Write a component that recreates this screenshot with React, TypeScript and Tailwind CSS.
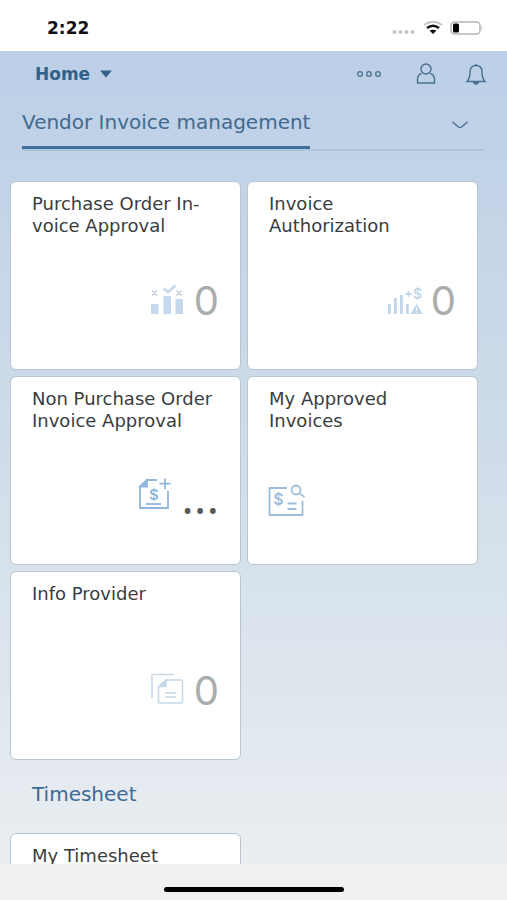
import type { ReactNode } from 'react'

interface Tile { title: string; icon: ReactNode; value?: string; loading?: boolean }

const OrderBars = () => (
  <svg width="40" height="40" viewBox="0 0 40 40" className="shrink-0 text-[#c5d8ed]" fill="currentColor" aria-hidden="true">
    <rect x="3" y="23" width="7.5" height="10"/>
    <rect x="15.5" y="15" width="7.5" height="18"/>
    <rect x="27.5" y="18" width="7.5" height="15"/>
    <path d="M4 9.5l5 5M9 9.5l-5 5M28.5 9.5l5 5M33.5 9.5l-5 5" stroke="#c3cfdc" strokeWidth="1.5" fill="none"/>
    <path d="M15.5 7.5l4.500 3.500 7.500-6.500" stroke="currentColor" strokeWidth="2.6" fill="none"/>
  </svg>
)

const AuthorizationBars = () => (
  <svg width="40" height="40" viewBox="0 0 40 40" className="shrink-0 text-[#c1d6ea]" fill="currentColor" aria-hidden="true">
    <rect x="3" y="23" width="2.8" height="10"/>
    <rect x="9" y="17" width="2.8" height="16"/>
    <rect x="15" y="14" width="2.8" height="19"/>
    <rect x="21" y="23" width="2.8" height="10"/>
    <path d="M23.5 10v6M20.5 13h6" stroke="currentColor" strokeWidth="1.8"/>
    <text x="32.5" y="18" textAnchor="middle" fontSize="14" fontWeight="600" fontFamily="Inter, sans-serif">$</text>
    <path d="M31.5 23l6 10h-12z"/>
    <path d="M31.5 26.5v3M31.5 30.5v1.2" stroke="#fff" strokeWidth="1.2"/>
  </svg>
)

const AddInvoice = () => (
  <svg width="40" height="40" viewBox="0 0 40 40" className="shrink-0 text-[#92b7db]" fill="none" stroke="currentColor" strokeWidth="1.8" aria-hidden="true">
    <path d="M22 4H12L5 10.500V32h28V15"/>
    <path d="M12 4v6.500H5z" fill="currentColor"/>
    <path d="M30 2.500v10.500M24.500 7.700h11"/>
    <path d="M11 28h15"/>
    <text x="19" y="24" textAnchor="middle" fontSize="15" fontWeight="600" fontFamily="Inter, sans-serif" fill="currentColor" stroke="none">$</text>
  </svg>
)

const SearchInvoice = () => (
  <svg width="40" height="40" viewBox="0 0 40 40" className="shrink-0 text-[#9dbedd]" fill="none" stroke="currentColor" strokeWidth="1.8" aria-hidden="true">
    <path d="M19 12H1.500v27H34.500V25"/>
    <circle cx="28" cy="14" r="4.500"/>
    <path d="M31.500 17.500l5 3.500"/>
    <path d="M19.500 27.500h9M19.500 33h9"/>
    <text x="10.500" y="28.500" textAnchor="middle" fontSize="16" fontWeight="600" fontFamily="Inter, sans-serif" fill="currentColor" stroke="none">$</text>
  </svg>
)

const Documents = () => (
  <svg width="40" height="40" viewBox="0 0 40 40" className="shrink-0 text-[#c5d9ea]" fill="none" stroke="currentColor" strokeWidth="1.6" aria-hidden="true">
    <path d="M4 27V4.500q0-1 1-1h21"/>
    <path d="M18 9h15q1.500 0 1.500 1.500v20q0 1.500-1.500 1.500H12q-1.500 0-1.500-1.500V16z"/>
    <path d="M18 9v6.500h-7z" fill="currentColor"/>
    <path d="M17 22h11M17 26h11"/>
  </svg>
)

const INVOICE_TILES: Tile[] = [
  { title: 'Purchase Order In-\nvoice Approval', icon: <OrderBars/>, value: '0' },
  { title: 'Invoice\nAuthorization', icon: <AuthorizationBars/>, value: '0' },
  { title: 'Non Purchase Order\nInvoice Approval', icon: <AddInvoice/>, loading: true },
  { title: 'My Approved\nInvoices', icon: <SearchInvoice/> },
  { title: 'Info Provider', icon: <Documents/>, value: '0' },
]

const TIMESHEET_TILES: Tile[] = [
  { title: 'My Timesheet', icon: null },
]

function TileGrid({ tiles }: { tiles: Tile[] }) {
  return (
    <div className="grid grid-cols-2 gap-1.5 pl-2.5 pr-[29px]">
      {tiles.map(t => {
        const hasValue = t.value !== undefined || t.loading
        return (
          <a key={t.title} href="#" className="flex h-[189px] flex-col rounded-md border border-[#b9c5d2] bg-white pt-[11px]">
            <h3 className="whitespace-pre pl-[21px] text-[18px] leading-[22px] text-[#3a3d40]">{t.title}</h3>
            <div className={`mt-auto mb-[48px] flex h-10 items-center gap-1.5 ${hasValue ? 'justify-end pr-[21px]' : 'pl-5'}`}>
              {t.icon}
              {t.value !== undefined && <span className="font-['Inter',sans-serif] text-[40px] leading-10 text-[#a9adad]">{t.value}</span>}
              {t.loading && <span className="font-['Open_Sans',sans-serif] text-[48px] leading-10 text-[#55585b]">...</span>}
            </div>
          </a>
        )
      })}
    </div>
  )
}

export default function App() {
  return (
    <div className="flex h-screen flex-col overflow-hidden bg-white font-['DejaVu_Sans',sans-serif]">
      {/* Phone status bar */}
      <div className="flex h-[51px] shrink-0 items-center justify-between pl-[47px] pr-6 pt-1">
        <span className="text-[17px] font-bold leading-5 text-[#111]">2:22</span>
        <svg width="92" height="20" viewBox="0 0 92 20" aria-hidden="true">
          <g fill="#c4c4c4">
            <circle cx="3.500" cy="14" r="2"/><circle cx="9.500" cy="14" r="2"/><circle cx="15.500" cy="14" r="2"/><circle cx="21.500" cy="14" r="2"/>
          </g>
          <g fill="none" strokeWidth="2.600">
            <path d="M33 7q9-6.500 18 0" stroke="#c4c4c4" strokeWidth="2"/>
            <path d="M36 10q6-4.500 12 0" stroke="#111"/>
          </g>
          <path d="M38.500 12.500q3.500-1.500 7 0L42 16z" fill="#111"/>
          <rect x="60" y="4" width="29" height="12" rx="3.500" fill="none" stroke="#b5b5b5" strokeWidth="1.500"/>
          <path d="M90.500 8q2 2 0 4z" fill="#b5b5b5"/>
          <rect x="62" y="5.500" width="6" height="9" rx="1.500" fill="#000"/>
        </svg>
      </div>

      <main className="min-h-0 flex-1 overflow-hidden bg-linear-to-b from-[#bccfe7] via-[#d0dde9] to-[#eaeef1]">
        <header className="flex h-[46px] items-center justify-between pl-[35px] pr-5">
          <button className="flex items-center gap-2.5 text-[17px] font-bold leading-6 text-[#32618a]">
            Home
            <svg width="12" height="8" viewBox="0 0 12 8" fill="currentColor" aria-hidden="true"><path d="M0 .5h12L6 7.500z"/></svg>
          </button>
          <div className="flex items-center text-[#48708f]">
            <button aria-label="More" className="mr-8">
              <svg width="26" height="24" viewBox="0 0 26 24" fill="none" stroke="currentColor" strokeWidth="1.300">
                <circle cx="5" cy="12" r="2.300"/><circle cx="14" cy="12" r="2.300"/><circle cx="23" cy="12" r="2.300"/>
              </svg>
            </button>
            <button aria-label="User" className="mr-7">
              <svg width="24" height="24" viewBox="0 0 24 24" fill="none" stroke="currentColor" strokeWidth="1.400">
                <circle cx="13" cy="7" r="5"/>
                <path d="M8.500 11.500Q4.500 13 4.500 17.500V21h17v-3.500q0-4.500-4-6"/>
              </svg>
            </button>
            <button aria-label="Notifications">
              <svg width="22" height="24" viewBox="0 0 22 24" fill="none" stroke="currentColor" strokeWidth="1.400">
                <path d="M2 19.500q3-3 3-9.500 0-6.500 6-6.500t6 6.500q0 6.500 3 9.500z"/>
                <path d="M11 2V4"/>
                <path d="M8.500 20h5q-.5 2-2.500 2t-2.500-2z" fill="currentColor"/>
              </svg>
            </button>
          </div>
        </header>

        <nav className="ml-[22px] mr-[22px] flex h-[54px] items-stretch justify-between border-b-2 border-[#aec4d8]">
          <a href="#" aria-current="page" className="flex items-center border-b-3 border-[#426f99] text-[20px] leading-7 text-[#42698e]">Vendor Invoice management</a>
          <button aria-label="Show all groups" className="mr-4 pt-1 text-[#48708f]">
            <svg width="18" height="10" viewBox="0 0 18 10" fill="none" stroke="currentColor" strokeWidth="1.500"><path d="M1.500 2L7.500 7q1.500 1 3 0L16.500 2"/></svg>
          </button>
        </nav>

        <section className="pt-[30px]">
          <TileGrid tiles={INVOICE_TILES}/>
        </section>

        <section>
          <h2 className="pb-[25px] pt-5 pl-8 text-[20px] leading-7 text-[#3b6a98]">Timesheet</h2>
          <TileGrid tiles={TIMESHEET_TILES}/>
        </section>
      </main>

      {/* Home indicator */}
      <footer className="flex h-9 shrink-0 items-center justify-center bg-[#f1f1f1] pt-3.5">
        <div className="h-[5px] w-[180px] rounded-full bg-black"/>
      </footer>
    </div>
  )
}
